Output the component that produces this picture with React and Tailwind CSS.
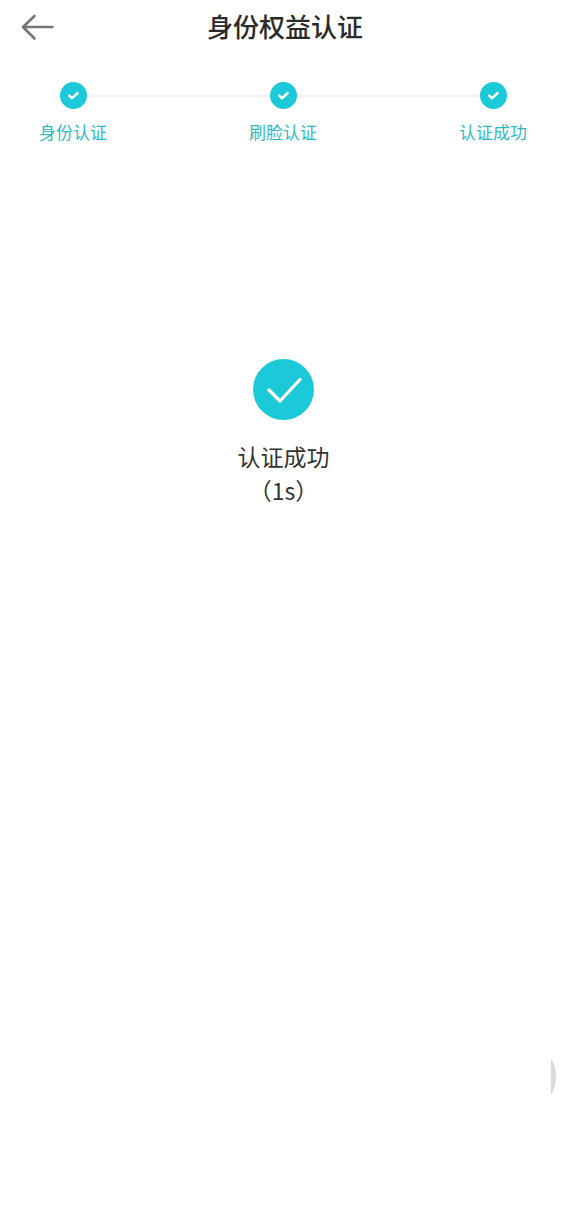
import React from "react";

const FONT = "font-['Noto_Sans_CJK_SC','Noto_Sans',sans-serif]";

function SmallCheck() {
  return (
    <div className="flex h-[27px] w-[27px] shrink-0 items-center justify-center rounded-full bg-[#1cc9d8]">
      <svg width="13" height="11" viewBox="0 0 13 11" fill="none">
        <path d="M2.2 5.6 L5.2 8.2 L10.6 3" stroke="#ffffff" strokeWidth="2.5" strokeLinecap="round" strokeLinejoin="round" />
      </svg>
    </div>
  );
}

export default function App() {
  return (
    <div className={`relative h-[1206px] w-[567px] overflow-hidden bg-white ${FONT}`}>
      <header className="relative flex h-[54px] items-center justify-center">
        <button className="absolute left-[21px] top-[14px] flex h-[27px] w-[34px] items-center justify-center">
          <svg width="34" height="27" viewBox="0 0 34 27" fill="none">
            <path d="M2 13 H31.5 M13.5 2 L2 13 L13.5 24.5" stroke="#757575" strokeWidth="2.6" strokeLinecap="round" strokeLinejoin="round" />
          </svg>
        </button>
        <h1 className="pl-[3px] text-[26px] font-medium leading-[52px] text-[#2b2b2b] mb-[2px]">身份权益认证</h1>
      </header>

      <section className="pt-[28px]">
        <div className="flex items-center px-[60px]">
          <SmallCheck />
          <div className="h-[2px] flex-1 bg-[#f2f2f2]" />
          <SmallCheck />
          <div className="h-[2px] flex-1 bg-[#f2f2f2]" />
          <SmallCheck />
        </div>
        <div className="mt-[12px] flex justify-between pl-[39px] pr-[40px] text-[17px] leading-[22px] text-[#2fb9c4]">
          <span className="w-[68px] whitespace-nowrap text-center">身份认证</span>
          <span className="w-[68px] whitespace-nowrap text-center">刷脸认证</span>
          <span className="w-[68px] whitespace-nowrap text-center">认证成功</span>
        </div>
      </section>

      <section className="mt-[216px] flex flex-col items-center">
        <div className="flex h-[61px] w-[61px] items-center justify-center rounded-full bg-[#1cc9d8]">
          <svg width="36" height="26" viewBox="0 0 36 26" fill="none">
            <path d="M3 13 L14 24 L34 2.5" stroke="#ffffff" strokeWidth="3.2" strokeLinecap="round" strokeLinejoin="round" />
          </svg>
        </div>
        <p className="mt-[20px] text-[23px] leading-[33px] text-[#333333]">认证成功</p>
        <p className="mt-[1px] text-[23px] leading-[33px] text-[#333333]">（1s）</p>
      </section>

      <div className="absolute left-[550px] top-[1058px]">
        <svg width="7" height="37" viewBox="0 0 7 37" fill="none">
          <path d="M1 0 C4 5 6 12 6 18.5 C6 25 4 32 1 37 Z" fill="#d9d9d9" />
        </svg>
      </div>
    </div>
  );
}
